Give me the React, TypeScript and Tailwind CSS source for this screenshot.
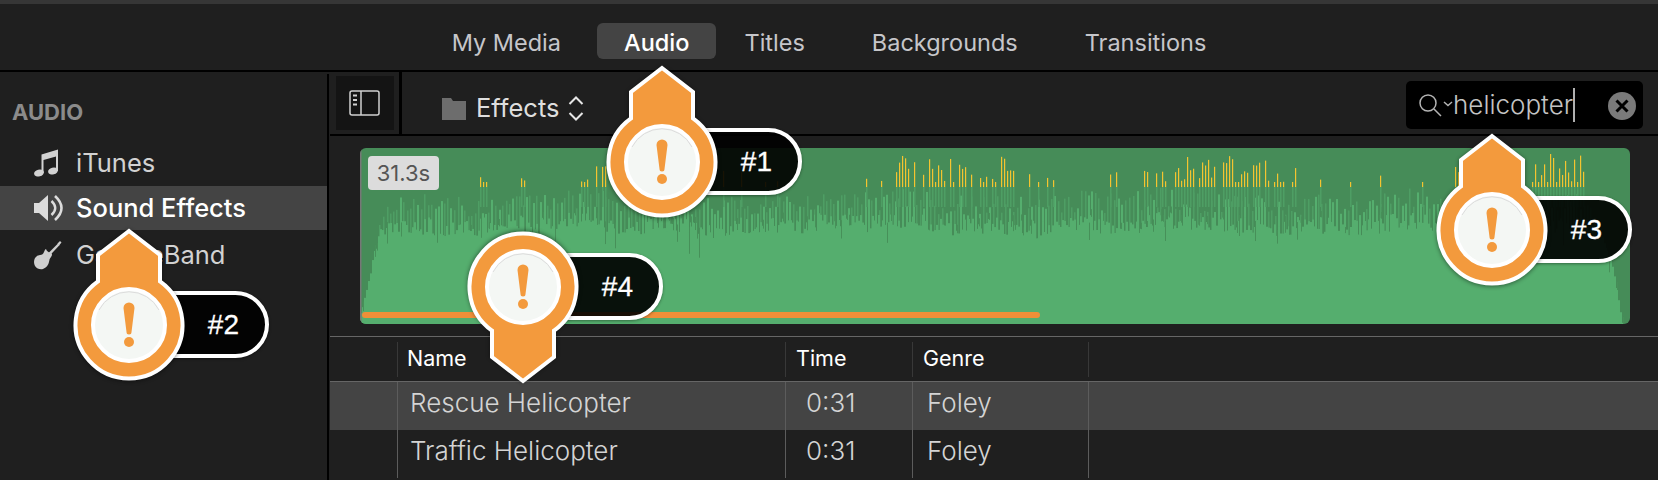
import React from 'react'

// small seeded random so the wave is the same on every load
function makeRandom(seed: number) {
  let s = seed
  return () => {
    s = (s + 0x6d2b79f5) | 0
    let t = Math.imul(s ^ (s >>> 15), 1 | s)
    t = (t + Math.imul(t ^ (t >>> 7), 61 | t)) ^ t
    return ((t ^ (t >>> 14)) >>> 0) / 4294967296
  }
}

const WAVE_W = 1270
const WAVE_H = 176

// loud parts of the clip: [from, to, chance of a peak, tallest top]
const PEAKS: [number, number, number, number][] = [
  [80, 86, 0.5, 25],
  [120, 128, 0.8, 19],
  [140, 175, 0.2, 29],
  [215, 250, 0.45, 18],
  [300, 420, 0.14, 22],
  [500, 530, 0.2, 24],
  [536, 655, 0.75, 6],
  [660, 760, 0.14, 22],
  [763, 810, 0.3, 20],
  [815, 938, 0.8, 8],
  [945, 1090, 0.07, 18],
  [1092, 1130, 0.55, 12],
  [1172, 1224, 0.8, 6],
]

// how far down the wave starts at the clip's fade in and fade out
function edgeTop(x: number) {
  if (x < 26) return 160 - x * 4.4
  if (x > 1225) return 40 + ((x - 1225) / 28) * 72 + (x > 1253 ? (x - 1253) * 3.2 : 0)
  return 0
}

function Waveform() {
  const rnd = makeRandom(71)
  const body: React.ReactNode[] = []
  const spikes: React.ReactNode[] = []
  const cuts: React.ReactNode[] = []
  const peaks: React.ReactNode[] = []

  for (let x = 0; x < WAVE_W; x += 2) {
    const slow = Math.sin(x / 46) * 3 + Math.sin(x / 13) * 2
    const edge = edgeTop(x)
    let solid = 68 + slow + rnd() * 18
    if (edge) solid = Math.max(solid, edge + 4 + rnd() * 8)
    body.push(<rect key={x} x={x} y={solid} width={2} height={WAVE_H - solid} fill="#55ae6e" />)
    if (rnd() < 0.18) {
      const depth = solid + rnd() * rnd() * 30
      cuts.push(<rect key={x} x={x + 1} y={solid - 6} width={1} height={depth - solid + 6} fill="#479059" />)
    }
  }

  for (let x = 1; x < WAVE_W; x += 3 + Math.floor(rnd() * 2)) {
    const slow = Math.sin(x / 46) * 3 + Math.sin(x / 13) * 2
    const edge = edgeTop(x)
    let top = 44 + slow + rnd() * 22
    if (edge) top = Math.max(top, edge + rnd() * 8)
    const light = rnd() < 0.45
    spikes.push(<rect key={x} x={x} y={top} width={light ? 2 : 1.5} height={90 - top > 0 ? 90 - top : 0} fill={light ? '#55ae6e' : '#4e9e64'} />)
  }

  PEAKS.forEach(([from, to, chance, tallest]) => {
    for (let x = from; x < to; x += 3) {
      if (rnd() > chance) continue
      const top = rnd() < 0.2 ? 34 : tallest + rnd() * (34 - tallest)
      peaks.push(<rect key={x} x={x} y={top} width={1.2} height={39 - top} fill="#f4c430" />)
      spikes.push(<rect key={`p${x}`} x={x} y={39} width={1.5} height={20} fill="#4e9e64" />)
    }
  })

  return (
    <svg width={WAVE_W} height={WAVE_H} className="block">
      <rect width={WAVE_W} height={WAVE_H} fill="#468c58" />
      {spikes}
      {body}
      {cuts}
      {peaks}
      <rect x={0} y={0} width={1.5} height={WAVE_H} fill="#777" />
    </svg>
  )
}

function Pin({ label, down, className }: { label: string; down?: boolean; className: string }) {
  return (
    <div className={`absolute w-0 h-0 ${className}`}>
      <div className="absolute left-0 top-[-34px] w-[140px] h-[67px] rounded-full border-[4px] border-white bg-black/90 flex items-center justify-end pr-[26px] shadow-[0_1px_3px_rgba(0,0,0,0.4)]">
        <span className="text-[28px] leading-none text-white font-['Liberation_Sans',sans-serif] [-webkit-text-stroke:0.3px_white]">{label}</span>
      </div>
      <svg width={130} height={170} viewBox="-65 -105 130 170" className="absolute left-[-65px] top-[-105px] overflow-visible">
        <path
          d="M0,-94 L31,-70 L31,-43.6 A53.5,53.5 0 1 1 -31,-43.6 L-31,-70 Z"
          transform={down ? 'rotate(180)' : undefined}
          fill="#f39a3d"
          stroke="#fff"
          strokeWidth={4}
          style={{ filter: 'drop-shadow(0 1px 2px rgba(0,0,0,0.45))' }}
        />
        <circle r={36} fill="#f4f7f4" stroke="#fff" strokeWidth={4} />
        <path d="M-30,-15 A33.8,33.8 0 0 1 30,-15" fill="none" stroke="#dcdcdc" strokeWidth={1} />
        <path d="M-5.5,-17 a5.5,5.5 0 0 1 11,0 L2.5,7 a2.5,2.5 0 0 1 -5,0 Z" fill="#f39a3d" />
        <circle cy={17} r={5} fill="#f39a3d" />
      </svg>
    </div>
  )
}

function MusicIcon() {
  return (
    <svg width={25} height={28} viewBox="0 0 25 28" fill="#d2d2d2">
      <path d="M7.5 5.5 L24 0.5 V22 H22 V7.5 L9.5 11 V24 H7.5 Z" />
      <ellipse cx={5} cy={24} rx={5} ry={3.4} transform="rotate(-15 5 24)" />
      <ellipse cx={19} cy={22} rx={5} ry={3.4} transform="rotate(-15 19 22)" />
    </svg>
  )
}

function SpeakerIcon() {
  return (
    <svg width={29} height={28} viewBox="0 0 29 28" fill="none">
      <path d="M0 9 H5 L14 1 V27 L5 19 H0 Z" fill="#dcdcdc" />
      <path d="M17.5 7 Q25 14 17.5 21" stroke="#dcdcdc" strokeWidth={2.4} />
      <path d="M21 2 Q34 14 21 26" stroke="#dcdcdc" strokeWidth={2.6} />
    </svg>
  )
}

function GuitarIcon() {
  return (
    <svg width={28} height={29} viewBox="0 0 28 29" fill="#cfcfcf">
      <path d="M12 8 Q13 11 17 12 Q19 13 17 16 Q15 18 15 21 Q14 26 9 28 Q4 29 1 25 Q-1 21 1 17 Q3 14 6 14 Q9 14 10 11 Q11 8 12 8 Z" />
      <path d="M11 15.5 L24 2.5 L25.6 4 L13 17.5 Z" />
      <path d="M23.5 2.5 L26 0 L27.5 1.5 L25 4.5 Z" />
    </svg>
  )
}

function SidebarRow({ icon, label, className }: { icon: React.ReactNode; label: string; className: string }) {
  return (
    <div className={`flex items-center pl-[34px] ${className}`}>
      <div className="w-[42px] shrink-0 flex">{icon}</div>
      <span className="text-[25.5px] leading-none">{label}</span>
    </div>
  )
}

const TABLE_ROWS = [
  { name: 'Rescue Helicopter', time: '0:31', genre: 'Foley', active: true },
  { name: 'Traffic Helicopter', time: '0:31', genre: 'Foley', active: false },
]

export default function App() {
  return (
    <div className="relative w-[1658px] h-[480px] overflow-hidden bg-[#1f1f1f] font-['Inter',sans-serif]">
      <div className="h-[4px] bg-[#363636]" />

      {/* browser tabs */}
      <div className="h-[66px] flex items-center justify-center pt-[12px] text-[23.5px] text-[#c6c6ca]">
        <div className="px-[27px]">My Media</div>
        <div className="ml-[9px] px-[27px] h-[36px] pt-[4px] -translate-y-[2px] flex items-center rounded-[6px] bg-[#444444] text-white font-medium">Audio</div>
        <div className="ml-[1px] px-[27px]">Titles</div>
        <div className="ml-[13px] px-[27px]">Backgrounds</div>
        <div className="ml-[13px] px-[27px]">Transitions</div>
      </div>
      <div className="h-[2px] bg-black" />

      <div className="flex h-[408px]">
        {/* sidebar */}
        <div className="w-[327px] shrink-0 pt-[28px]">
          <div className="pl-[12px] h-[24px] flex items-center text-[22px] font-bold text-[#8b8b8b] leading-none">AUDIO</div>
          <div className="mt-[17px]">
            <SidebarRow icon={<MusicIcon />} label="iTunes" className="h-[45px] pb-[1px] text-[#d2d2d2]" />
            <SidebarRow icon={<SpeakerIcon />} label="Sound Effects" className="h-[44px] bg-[#444444] text-white font-medium" />
            <SidebarRow icon={<GuitarIcon />} label="GarageBand" className="h-[50px] text-[#d2d2d2]" />
          </div>
        </div>
        <div className="w-[2px] mt-[2px] bg-black" />

        <div className="ml-[1px] flex-1 min-w-0">
          {/* toolbar */}
          <div className="h-[62px] flex items-center">
            <div className="ml-[6px] w-[58px] h-[54px] bg-[#141414] flex items-center justify-center">
              <svg width={32} height={26} viewBox="0 0 32 26" fill="none" stroke="#d0d0d0" strokeWidth={1.5}>
                <rect x={1} y={1} width={29} height={24} rx={2} />
                <path d="M12 1 V25" />
                <path d="M4 5.5 H8 M4 10 H8 M4 14.5 H8" strokeWidth={2} />
              </svg>
            </div>
            <div className="ml-[5px] w-[3px] h-[62px] bg-black" />
            <div className="flex items-center mt-[10px]">
              <svg width={24} height={23} viewBox="0 0 24 23" className="ml-[40px]" fill="#6d6d6d">
                <path d="M0 1 H9 L11 4 H24 V23 H0 Z" />
              </svg>
              <span className="ml-[10px] text-[25.5px] leading-none text-[#dedede]">Effects</span>
              <svg width={16} height={27} viewBox="0 0 16 27" className="ml-[9px]" fill="none" stroke="#e6e6e6" strokeWidth={2}>
                <path d="M1.5 9 L8 2.5 L14.5 9" />
                <path d="M1.5 18 L8 24.5 L14.5 18" />
              </svg>
            </div>

            {/* search */}
            <div className="ml-auto mt-[4px] mr-[15px] w-[237px] h-[48px] rounded-[5px] bg-black flex items-center relative">
              <svg width={38} height={24} viewBox="0 0 38 24" className="ml-[12px] shrink-0" fill="none" stroke="#b4b4b4" strokeWidth={1.5}>
                <circle cx={10} cy={10} r={8} />
                <path d="M16 16 L23 23" />
                <path d="M26 9 L30 12.5 L34 9" />
              </svg>
              <span className="text-[26px] leading-none font-light text-[#c4c4c4] -ml-[3px]">helicopter</span>
              <div className="w-[2px] h-[34px] bg-[#b0b0b0]" />
              <div className="absolute right-[7px] top-[11px] w-[28px] h-[28px] rounded-full bg-[#7a7a7a] flex items-center justify-center">
                <svg width={14} height={14} viewBox="0 0 14 14" stroke="#000" strokeWidth={3}>
                  <path d="M1.5 1.5 L12.5 12.5 M12.5 1.5 L1.5 12.5" />
                </svg>
              </div>
            </div>
          </div>
          <div className="h-[2px] bg-black" />

          {/* audio clip */}
          <div className="relative mt-[12px] ml-[30px] w-[1270px] h-[176px] rounded-[6px] overflow-hidden">
            <Waveform />
            <div className="absolute left-[8px] top-[8px] w-[71px] h-[34px] rounded-[4px] bg-[#dcdcdc] flex items-center justify-center text-[22px] leading-none text-[#555555]">31.3s</div>
            <div className="absolute left-[2px] top-[164px] w-[678px] h-[6px] rounded-full bg-[#ef8f38]" />
          </div>

          {/* list */}
          <div className="mt-[12px] h-[1px] bg-[#666666]" />
          <div className="h-[44px] flex items-center text-[21.5px] leading-none text-white">
            <div className="w-[67px] h-[35px]" />
            <div className="w-[388px] h-[35px] border-l border-[#383838] pl-[9px] flex items-center">Name</div>
            <div className="w-[127px] h-[35px] border-l border-[#383838] pl-[10px] flex items-center">Time</div>
            <div className="w-[177px] h-[35px] border-l border-r border-[#383838] pl-[10px] flex items-center">Genre</div>
          </div>
          <div className="h-[1px] bg-[#666666]" />
          {TABLE_ROWS.map((row) => (
            <div key={row.name} className={`h-[48px] flex text-[26px] leading-none text-[#d4d4d4] font-light ${row.active ? 'bg-[#444444]' : ''}`}>
              <div className="w-[67px]" />
              <div className="w-[388px] border-l border-[#5c5c5c] pl-[12px] pb-[6px] flex items-center">{row.name}</div>
              <div className="w-[127px] border-l border-[#5c5c5c] pl-[20px] pb-[6px] flex items-center">{row.time}</div>
              <div className="w-[177px] border-l border-r border-[#5c5c5c] pl-[14px] pb-[6px] flex items-center">{row.genre}</div>
            </div>
          ))}
        </div>
      </div>

      <Pin label="#1" className="left-[662px] top-[162px]" />
      <Pin label="#2" className="left-[129px] top-[325px]" />
      <Pin label="#3" className="left-[1492px] top-[230px]" />
      <Pin label="#4" down className="left-[523px] top-[287px]" />
    </div>
  )
}
